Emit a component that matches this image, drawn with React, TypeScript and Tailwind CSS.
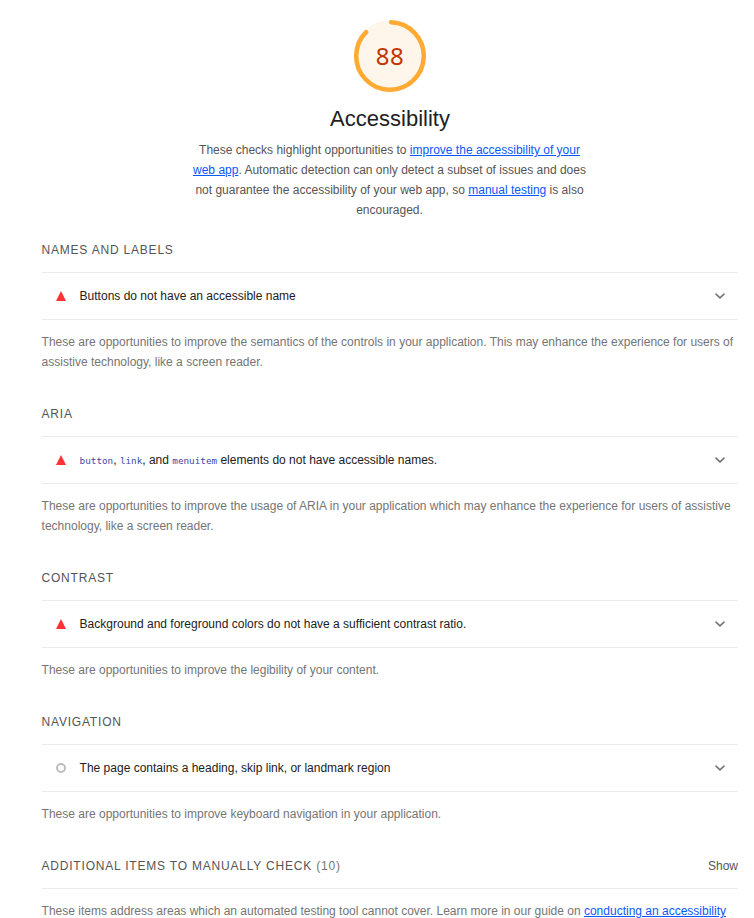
import React from 'react';

const Chevron = () => (
  <svg width="24" height="24" viewBox="0 0 24 24" className="mr-1.5 shrink-0" fill="#757575">
    <path d="M16 9 12 12.7 8 9 7 10.2 12 14.9 17 10.2z" />
  </svg>
);

function Group({ title, desc, pass, children }: { title: string; desc: React.ReactNode; pass?: boolean; children: React.ReactNode }) {
  return (
    <section className="mb-8">
      <h2 className="-ml-[0.5px] h-5 mb-3 text-[12px] leading-5 tracking-[0.8px] uppercase text-[#555]">{title}</h2>
      <div className="flex h-12 items-center border-y border-[#ebebeb]">
        <div className="flex w-[38px] shrink-0 justify-center">
          {pass ? (
            <span className="block size-[10px] rounded-full border-2 border-[#bdbdbd]" />
          ) : (
            <svg width="10" height="10" viewBox="0 0 10 10"><path d="M5 0l5 10H0z" fill="#f33" /></svg>
          )}
        </div>
        <div className="-ml-[0.4px] flex-1 text-[12px] leading-5 text-[#212121]">{children}</div>
        <Chevron />
      </div>
      <p className="-ml-[0.4px] mt-3 text-[12px] leading-5 text-[#757575]">{desc}</p>
    </section>
  );
}

const Code = ({ children }: { children: string }) => (
  <code className="font-['DejaVu_Sans_Mono',monospace] text-[9.3px] text-[#3949ab]">{children}</code>
);

const Link = ({ children }: { children: string }) => <a href="#" className="text-[#0b57ff] underline">{children}</a>;

export default function App() {
  return (
    <main className="h-[918px] overflow-hidden bg-white pl-[42px] pr-4 font-['Liberation_Sans',Arial,sans-serif] text-[12px] leading-5">
      <header className="flex flex-col items-center pt-5">
        <div className="grid size-18 place-items-center">
          <svg width="72" height="72" viewBox="0 0 72 72" className="col-start-1 row-start-1">
            <circle cx="36" cy="36" r="36" fill="#fff6eb" />
            <circle cx="36" cy="36" r="33.75" fill="none" stroke="#fa3" strokeWidth="4.5" strokeLinecap="round" strokeDasharray="184 213" transform="rotate(-88 36 36)" />
          </svg>
          <span className="col-start-1 row-start-1 font-['Noto_Sans',sans-serif] text-[24px] leading-6 tracking-[0.6px] text-[#c33300]">88</span>
        </div>
        <h1 className="mt-[13px] text-[22px] leading-7 text-[#212121]">Accessibility</h1>
        <p className="mt-[7px] mr-px text-center text-[#555]">
          These checks highlight opportunities to <Link>improve the accessibility of your</Link><br />
          <Link>web app</Link>. Automatic detection can only detect a subset of issues and does<br />
          not guarantee the accessibility of your web app, so <Link>manual testing</Link> is also<br />
          encouraged.
        </p>
      </header>
      <div className="mt-5">
        <Group title="Names and labels" desc={<>These are opportunities to improve the semantics of the controls in your application. This may enhance the experience for users of<br />assistive technology, like a screen reader.</>}>Buttons do not have an accessible name</Group>
        <Group title="ARIA" desc={<>These are opportunities to improve the usage of ARIA in your application which may enhance the experience for users of assistive<br />technology, like a screen reader.</>}><Code>button</Code>, <Code>link</Code>, and <Code>menuitem</Code> elements do not have accessible names.</Group>
        <Group title="Contrast" desc="These are opportunities to improve the legibility of your content.">Background and foreground colors do not have a sufficient contrast ratio.</Group>
        <Group title="Navigation" pass desc="These are opportunities to improve keyboard navigation in your application.">The page contains a heading, skip link, or landmark region</Group>
        <div className="flex h-[33px] justify-between border-b border-[#ebebeb] text-[#555]">
          <h2 className="-ml-[0.5px] tracking-[0.8px] uppercase">Additional items to manually check <span className="text-[#757575]">(10)</span></h2>
          <span>Show</span>
        </div>
        <p className="-ml-[0.4px] mt-3 whitespace-nowrap text-[#757575]">These items address areas which an automated testing tool cannot cover. Learn more in our guide on <Link>conducting an accessibility</Link></p>
      </div>
    </main>
  );
}
